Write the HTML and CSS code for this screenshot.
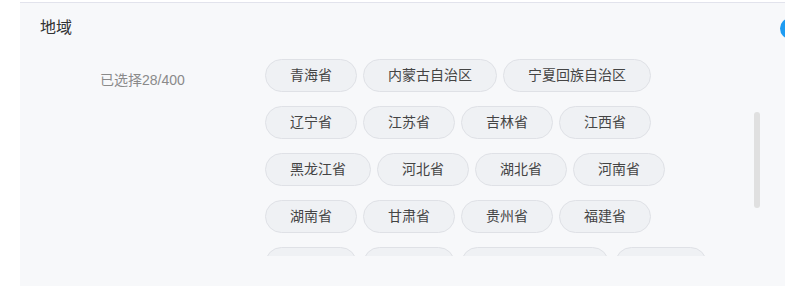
FILE: index.html
```html
<!DOCTYPE html>
<html lang="zh-CN">
<head>
<meta charset="utf-8">
<title>地域</title>
<link rel="stylesheet" href="styles.css">
</head>
<body>
<div class="panel">
  <div class="panel-head">
    <span class="title">地域</span>
    <span class="dot"></span>
  </div>
  <div class="panel-body">
    <div class="count">已选择28/400</div>
    <div class="scroll">
      <div class="tags">
        <span class="tag">青海省</span>
        <span class="tag">内蒙古自治区</span>
        <span class="tag">宁夏回族自治区</span>
        <span class="tag">辽宁省</span>
        <span class="tag">江苏省</span>
        <span class="tag">吉林省</span>
        <span class="tag">江西省</span>
        <span class="tag">黑龙江省</span>
        <span class="tag">河北省</span>
        <span class="tag">湖北省</span>
        <span class="tag">河南省</span>
        <span class="tag">湖南省</span>
        <span class="tag">甘肃省</span>
        <span class="tag">贵州省</span>
        <span class="tag">福建省</span>
        <span class="tag">山东省</span>
        <span class="tag">山西省</span>
        <span class="tag">广西壮族自治区</span>
        <span class="tag">四川省</span>
      </div>
      <span class="thumb"></span>
    </div>
  </div>
</div>
</body>
</html>
```
FILE: styles.css
```css
html, body {
  margin: 0;
  padding: 0;
  background: #ffffff;
  overflow: hidden;
  height: 286px;
}
body {
  font-family: "Liberation Sans", "Noto Sans CJK SC", sans-serif;
  color: #333;
}
.panel {
  margin: 2px 0 0 20px;
  width: 785px;
  height: 283px;
  background: #f7f8fa;
  border-top: 1px solid #e2e3ec;
}
.panel-head {
  display: flex;
  justify-content: space-between;
  align-items: center;
  padding: 14px 4px 0 20px;
  height: 22px;
}
.title {
  font-size: 16px;
  line-height: 22px;
  color: #333;
}
.dot {
  width: 21px;
  height: 21px;
  border-radius: 50%;
  background: #1d9bf2;
}
.panel-body {
  display: flex;
  margin-top: 20px;
  padding-left: 80px;
}
.count {
  width: 165px;
  flex: none;
  margin-top: 11px;
  font-size: 14px;
  line-height: 20px;
  color: #8a8a8a;
}
.scroll {
  position: relative;
  width: 497px;
  height: 197px;
  overflow: hidden;
}
.tags {
  width: 450px;
  display: flex;
  flex-wrap: wrap;
  gap: 14px 6px;
}
.tag {
  box-sizing: border-box;
  height: 33px;
  padding: 0 24px;
  border: 1px solid #dfe1e6;
  border-radius: 17px;
  background: #eff1f4;
  font-size: 14px;
  line-height: 31px;
  color: #444;
  white-space: nowrap;
}
.thumb {
  position: absolute;
  right: 2px;
  top: 53px;
  width: 6px;
  height: 96px;
  border-radius: 3px;
  background: #e0e0e0;
}
```
